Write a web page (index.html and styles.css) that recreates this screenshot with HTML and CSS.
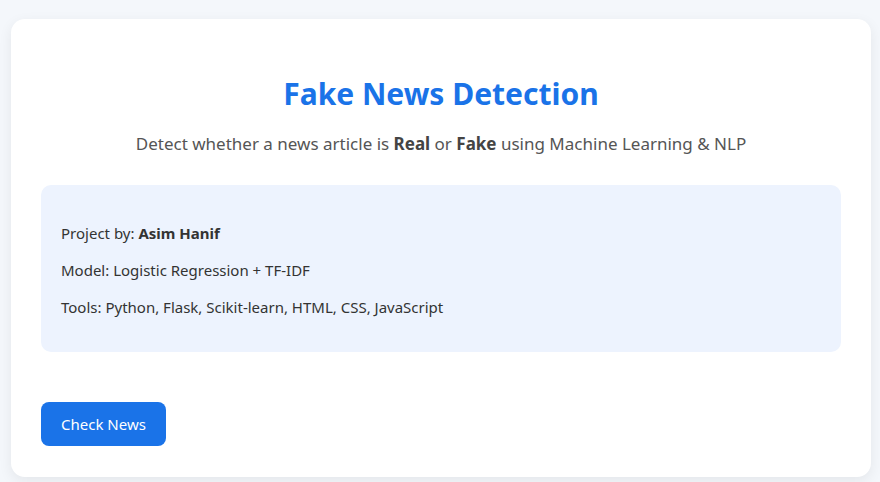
FILE: index.html
```html
<!DOCTYPE html>
<html lang="en">
<head>
<meta charset="utf-8">
<title>Fake News Detection</title>
<link rel="stylesheet" href="styles.css">
</head>
<body>
<main class="card">
  <h1 class="title">Fake News Detection</h1>
  <p class="subtitle">Detect whether a news article is <b>Real</b> or <b>Fake</b> using Machine Learning &amp; NLP</p>
  <section class="info">
    <p>Project by: <b>Asim Hanif</b></p>
    <p>Model: Logistic Regression + TF-IDF</p>
    <p>Tools: Python, Flask, Scikit-learn, HTML, CSS, JavaScript</p>
  </section>
  <div class="actions">
    <button class="btn">Check News</button>
  </div>
</main>
</body>
</html>
```

FILE: styles.css
```css
* { box-sizing: border-box; }
html, body { height: 100%; }
body {
  margin: 0;
  padding: 19px 9px 5px 11px;
  background: #f4f7fb;
  font-family: "Noto Sans", "Open Sans", sans-serif;
  color: #333;
}
.card {
  background: #fff;
  border-radius: 14px;
  box-shadow: 0 4px 14px rgba(0, 0, 0, 0.07);
  padding: 30px 30px 30px 30px;
  height: 458px;
}
.title {
  margin: 26px 0 0;
  text-align: center;
  color: #1a73e8;
  font-size: 30px;
  line-height: 38px;
  font-weight: 700;
}
.subtitle {
  margin: 19px 0 0;
  text-align: center;
  color: #555;
  font-size: 17px;
  line-height: 24px;
}
.subtitle b { color: #444; }
.info {
  margin-top: 29px;
  background: #edf3fe;
  border-radius: 10px;
  padding: 23px 20px 19px;
  font-size: 15px;
  color: #333;
}
.info p { margin: 14px 0; line-height: 23px; }
.actions { margin-top: 50px; }
.btn {
  background: #1a73e8;
  color: #fff;
  border: 0;
  border-radius: 8px;
  font-family: inherit;
  font-size: 15px;
  height: 44px;
  padding: 0 20px;
  cursor: pointer;
}
```
